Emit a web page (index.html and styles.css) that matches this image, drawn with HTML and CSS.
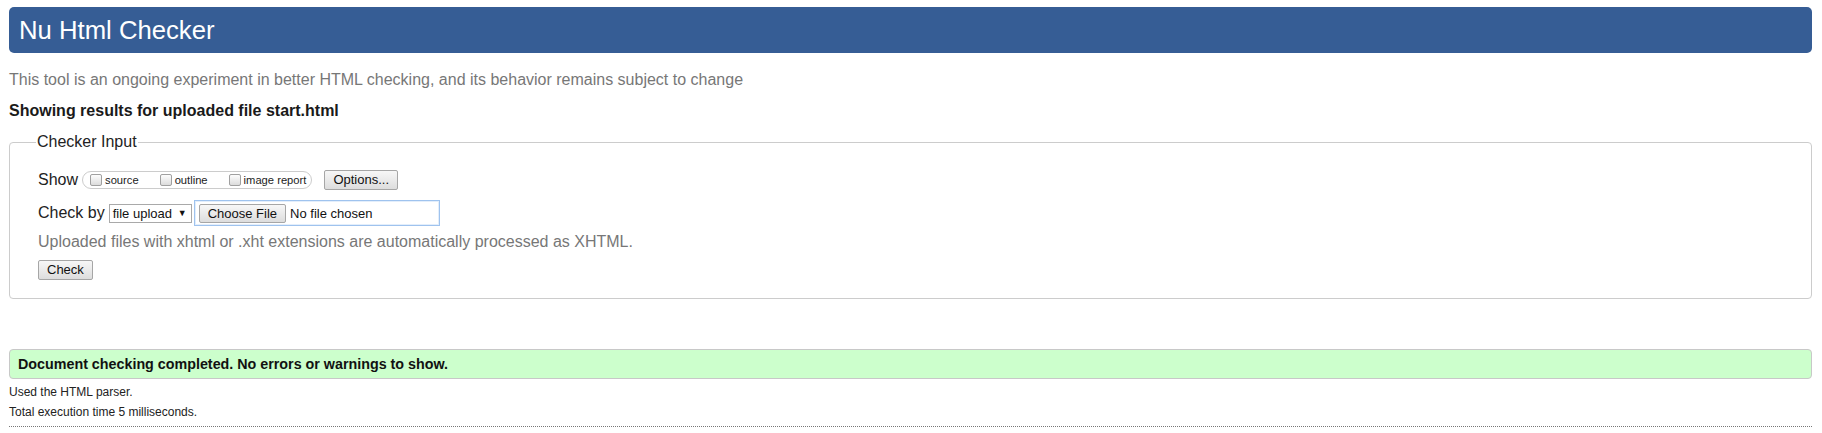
FILE: index.html
```html
<!DOCTYPE html>
<html lang="en">
<head>
<meta charset="utf-8">
<title>Showing results for uploaded file start.html - Nu Html Checker</title>
<link rel="stylesheet" href="styles.css">
</head>
<body>
<h1 class="title">Nu Html Checker</h1>
<p class="intro">This tool is an ongoing experiment in better HTML checking, and its behavior remains subject to change</p>
<p class="results-for">Showing results for uploaded file start.html</p>
<fieldset class="checker">
  <legend class="legend">Checker Input</legend>
  <div class="row show-row">
    <span class="row-label">Show</span>
    <span class="pill">
      <label class="opt"><input type="checkbox" class="cb">source</label>
      <label class="opt"><input type="checkbox" class="cb">outline</label>
      <label class="opt last"><input type="checkbox" class="cb">image report</label>
    </span>
    <button class="btn options-btn" type="button">Options...</button>
  </div>
  <div class="row by-row">
    <span class="row-label">Check by</span>
    <span class="select">file upload<span class="arrow">▼</span></span>
    <span class="file-box">
      <button class="btn file-btn" type="button">Choose File</button>
      <span class="file-name">No file chosen</span>
    </span>
  </div>
  <p class="hint">Uploaded files with xhtml or .xht extensions are automatically processed as XHTML.</p>
  <button class="btn check-btn" type="button">Check</button>
</fieldset>
<div class="success">Document checking completed. No errors or warnings to show.</div>
<p class="details">Used the HTML parser.</p>
<p class="details">Total execution time 5 milliseconds.</p>
<hr class="rule">
</body>
</html>
```

FILE: styles.css
```css
* { box-sizing: border-box; }

body {
  margin: 0;
  padding: 7px 10px 0 9px;
  background: #fff;
  color: #222;
  font-family: "Liberation Sans", Arial, sans-serif;
}

.title {
  margin: 0;
  height: 46px;
  padding: 0 10px;
  background: #365d95;
  color: #fff;
  border-radius: 5px;
  font-size: 25.7px;
  font-weight: normal;
  line-height: 46px;
}

.intro {
  margin: 18px 0 0;
  font-size: 16px;
  line-height: 18px;
  color: #777;
}

.results-for {
  margin: 13px 0 0;
  font-size: 16px;
  line-height: 18px;
  font-weight: bold;
  color: #1a1a1a;
}

.checker {
  margin: 13px 0 0;
  padding: 19px 28px 18px;
  border: 1px solid #ccc;
  border-radius: 4px;
  min-width: 0;
}

.legend {
  margin-left: -2px;
  padding: 0 1px;
  font-size: 16px;
  line-height: 18px;
  color: #222;
}

.row {
  display: flex;
  align-items: center;
  font-size: 16px;
}

.show-row { height: 20px; }

.by-row {
  height: 26px;
  margin-top: 10px;
}

.row-label { margin-right: 4px; }

.pill {
  display: flex;
  align-items: center;
  height: 18px;
  padding: 0 5px 0 7px;
  border: 1px solid #ccc;
  border-radius: 9px;
}

.opt {
  display: flex;
  align-items: center;
  margin-right: 21px;
  font-size: 11.2px;
  color: #222;
}

.opt.last { margin-right: 0; }

.cb {
  appearance: none;
  -webkit-appearance: none;
  width: 12px;
  height: 12px;
  margin: 0 3px 0 0;
  border: 1px solid #a0a0a0;
  border-radius: 2px;
  background: linear-gradient(#fdfdfd, #dcdcdc);
}

.btn {
  height: 20px;
  padding: 0 8px;
  border: 1px solid #a6a6a6;
  border-radius: 2px;
  background: linear-gradient(#f7f7f7, #dddddd);
  color: #111;
  font-family: "Liberation Sans", Arial, sans-serif;
  font-size: 13px;
  line-height: 18px;
}

.options-btn { margin-left: 12px; }

.select {
  display: flex;
  align-items: center;
  height: 19px;
  width: 83px;
  padding: 0 4px 0 3px;
  border: 1px solid #a9a9a9;
  background: #fff;
  font-size: 13px;
  color: #111;
}

.arrow {
  margin-left: auto;
  font-size: 9px;
}

.file-box {
  display: flex;
  align-items: center;
  width: 246px;
  height: 26px;
  margin-left: 2px;
  padding: 0 4px;
  border: 1px solid #9fc3ee;
  box-shadow: inset 0 0 0 1px #e3eefb;
}

.file-btn { height: 19px; line-height: 17px; }

.file-name {
  margin-left: 4px;
  font-size: 13px;
  color: #111;
}

.hint {
  margin: 7px 0 0;
  font-size: 16px;
  line-height: 18px;
  color: #777;
}

.check-btn {
  display: block;
  margin-top: 9px;
}

.success {
  margin-top: 50px;
  height: 30px;
  padding: 0 8px;
  border: 1px solid #c8c8c8;
  border-radius: 4px;
  background: #ccffcc;
  font-size: 14.3px;
  font-weight: bold;
  line-height: 28px;
  color: #111;
}

.details {
  margin: 0;
  font-size: 12px;
  line-height: 20px;
  color: #222;
}

.success + .details { margin-top: 3px; }

.rule {
  margin: 4px 0 0;
  height: 0;
  border: 0;
  border-top: 1px dotted #777;
}
```
